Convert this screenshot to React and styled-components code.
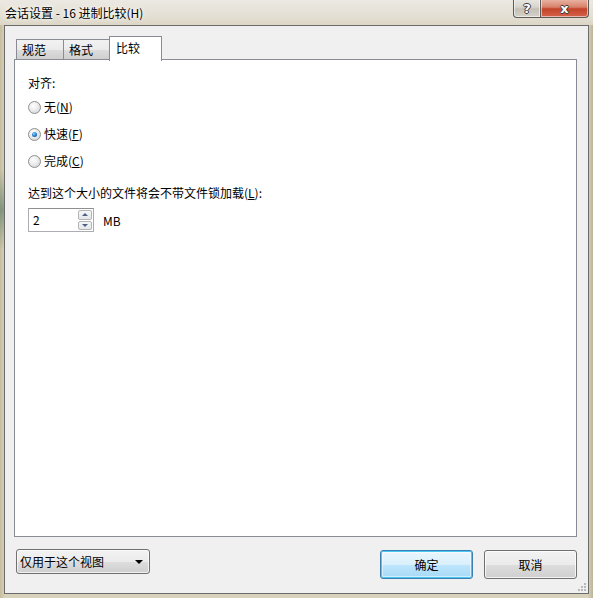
import React from "react";
import styled, { createGlobalStyle } from "styled-components";

const Global = createGlobalStyle`
  html, body { margin: 0; padding: 0; }
  body { font-family: "Noto Sans CJK SC", "Noto Sans", sans-serif; font-size: 12px; color: #000; }
  * { box-sizing: border-box; }
`;

const Window = styled.div`
  width: 593px;
  height: 598px;
  display: flex;
  flex-direction: column;
  overflow: hidden;
  background:
    radial-gradient(ellipse 60px 10px at 150px 18px, rgba(150,135,90,0.35), transparent),
    radial-gradient(ellipse 90px 8px at 260px 16px, rgba(120,110,90,0.25), transparent),
    radial-gradient(ellipse 40px 40px at 2px 210px, rgba(80,120,100,0.6), transparent),
    linear-gradient(to right, #c6bd9e 0px, #d8d2bc 5px, #d8d2bc 588px, #bdb498 593px),
    linear-gradient(to bottom, #e9e6de 0px, #e2ddd0 25px);
  background-blend-mode: normal;
`;

const TitleBar = styled.div`
  height: 25px;
  flex: none;
  display: flex;
  align-items: flex-start;
  background: linear-gradient(to bottom, #ebe9e2 0%, #e4e0d5 60%, #dcd6c6 100%);
`;

const Title = styled.div`
  padding: 5px 0 0 5px;
  font-size: 12px;
  line-height: 16px;
  color: #000;
  text-shadow: 0 0 6px #fff, 0 0 3px #fff;
  flex: 1;
`;

const Captions = styled.div`
  display: flex;
  margin-right: 4px;
  margin-top: -1px;
`;

const CaptionBtn = styled.div`
  width: ${(p) => p.$w}px;
  height: 19px;
  display: flex;
  align-items: center;
  justify-content: center;
  border: 1px solid #5d5a55;
  border-top: none;
  font-family: "DejaVu Sans", sans-serif;
  font-weight: bold;
  font-size: ${(p) => p.$fs}px;
  color: #fff;
  text-shadow: -1px 0 #3a3a3a, 1px 0 #3a3a3a, 0 -1px #3a3a3a, 0 1px #3a3a3a;
  background: ${(p) =>
    p.$close
      ? "linear-gradient(to bottom, #e8b8a8 0%, #d9826a 45%, #c2432a 55%, #d6634a 100%)"
      : "linear-gradient(to bottom, #e9e8e4 0%, #d7d4cc 45%, #c4c0b6 55%, #d4d1c8 100%)"};
  border-radius: ${(p) => (p.$close ? "0 0 4px 0" : "0 0 0 4px")};
  ${(p) => (p.$close ? "border-left: none;" : "")}
  box-shadow: inset 0 0 0 1px rgba(255,255,255,0.55);
`;

const Client = styled.div`
  flex: 1;
  margin: 0 4px 4px 4px;
  border: 1px solid #6b6b6b;
  background: #f0f0f0;
  padding: 9px 11px 0 9px;
  display: flex;
  flex-direction: column;
  position: relative;
`;

const TabStrip = styled.div`
  height: 25px;
  display: flex;
  align-items: flex-end;
  padding-left: 2px;
  position: relative;
  z-index: 1;
`;

const Tab = styled.div`
  height: ${(p) => (p.$active ? 25 : 21)}px;
  width: ${(p) => p.$w}px;
  margin-left: ${(p) => p.$ml || 0}px;
  margin-bottom: ${(p) => (p.$active ? -1 : 0)}px;
  border: 1px solid #898c95;
  border-bottom: ${(p) => (p.$active ? "none" : "1px solid #898c95")};
  background: ${(p) =>
    p.$active ? "#fff" : "linear-gradient(to bottom, #f2f2f2 0%, #ebebeb 50%, #dddddd 51%, #cfcfcf 100%)"};
  padding: ${(p) => (p.$active ? "3px 0 0 6px" : "2px 0 0 5px")};
  font-size: 12px;
  line-height: 16px;
`;

const Panel = styled.div`
  height: 478px;
  margin-top: -1px;
  border: 1px solid #898c95;
  background: #fff;
  padding: 15px 13px 0 13px;
  display: flex;
  flex-direction: column;
`;

const Label = styled.div`
  height: 16px;
  line-height: 16px;
  margin-top: ${(p) => p.$mt || 0}px;
`;

const RadioRow = styled.div`
  height: 16px;
  display: flex;
  align-items: center;
  gap: 3px;
  margin-top: ${(p) => p.$mt}px;
  line-height: 16px;
`;

const RadioCircle = styled.span`
  width: 13px;
  height: 13px;
  border-radius: 50%;
  border: 1px solid #8e8f8f;
  background: radial-gradient(circle at 40% 35%, #ffffff 0%, #f0f0f0 35%, #cfcfcf 100%);
  display: flex;
  align-items: center;
  justify-content: center;
  flex: none;
  &::after {
    content: "";
    display: ${(p) => (p.$checked ? "block" : "none")};
    width: 5px;
    height: 5px;
    border-radius: 50%;
    background: radial-gradient(circle at 40% 35%, #8ed3ff 0%, #1d78c8 55%, #0d3d74 100%);
  }
`;

const U = styled.span`
  text-decoration: underline;
`;

const SpinRow = styled.div`
  display: flex;
  align-items: center;
  margin-top: 7px;
  gap: 9px;
`;

const SpinBox = styled.div`
  width: 66px;
  height: 24px;
  border: 1px solid #abadb3;
  border-top-color: #8e8f8f;
  background: #fff;
  display: flex;
  align-items: stretch;
  padding: 1px 1px 1px 4px;
`;

const SpinValue = styled.div`
  flex: 1;
  line-height: 20px;
`;

const SpinButtons = styled.div`
  width: 14px;
  display: flex;
  flex-direction: column;
  gap: 1px;
`;

const SpinBtn = styled.div`
  flex: 1;
  border: 1px solid #b4b4b4;
  border-radius: 2px;
  background: linear-gradient(to bottom, #f4f6f8 0%, #e3e7ec 100%);
  display: flex;
  align-items: center;
  justify-content: center;
  &::after {
    content: "";
    width: 0;
    height: 0;
    border-left: 3px solid transparent;
    border-right: 3px solid transparent;
    ${(p) => (p.$up ? "border-bottom: 3px solid #4e5f80;" : "border-top: 3px solid #4e5f80;")}
  }
`;

const Footer = styled.div`
  display: flex;
  align-items: flex-start;
  margin-top: 12px;
  padding-left: 2px;
`;

const Dropdown = styled.div`
  width: 134px;
  height: 25px;
  border: 1px solid #707070;
  border-radius: 3px;
  background: linear-gradient(to bottom, #f2f2f2 0%, #ebebeb 50%, #dddddd 51%, #cfcfcf 100%);
  box-shadow: inset 0 0 0 1px rgba(255,255,255,0.7);
  display: flex;
  align-items: center;
  justify-content: space-between;
  padding: 0 6px 0 3px;
  line-height: 16px;
  &::after {
    content: "";
    width: 0;
    height: 0;
    border-left: 4px solid transparent;
    border-right: 4px solid transparent;
    border-top: 4px solid #000;
  }
`;

const Buttons = styled.div`
  margin-left: auto;
  display: flex;
  gap: 11px;
  margin-top: 1px;
`;

const Button = styled.div`
  width: 93px;
  height: 29px;
  border-radius: 3px;
  display: flex;
  align-items: center;
  justify-content: center;
  line-height: 16px;
  border: 1px solid ${(p) => (p.$default ? "#3c7fb1" : "#707070")};
  background: ${(p) =>
    p.$default
      ? "linear-gradient(to bottom, #eaf6fd 0%, #d9f0fc 50%, #bee6fd 51%, #a7d9f5 100%)"
      : "linear-gradient(to bottom, #f2f2f2 0%, #ebebeb 50%, #dddddd 51%, #cfcfcf 100%)"};
  box-shadow: ${(p) =>
    p.$default
      ? "inset 0 0 0 1px #48c7f4, inset 0 0 0 2px rgba(255,255,255,0.5)"
      : "inset 0 0 0 1px rgba(255,255,255,0.75)"};
`;

const Grip = styled.svg`
  position: absolute;
  right: 1px;
  bottom: 1px;
`;

export default function App() {
  return (
    <>
      <Global />
      <Window>
        <TitleBar>
          <Title>会话设置 - 16 进制比较(H)</Title>
          <Captions>
            <CaptionBtn $w={28} $fs={13}>?</CaptionBtn>
            <CaptionBtn $w={48} $fs={13} $close>x</CaptionBtn>
          </Captions>
        </TitleBar>
        <Client>
          <TabStrip>
            <Tab $w={48}>规范</Tab>
            <Tab $w={47} $ml={-1}>格式</Tab>
            <Tab $w={53} $ml={-1} $active>比较</Tab>
          </TabStrip>
          <Panel>
            <Label>对齐:</Label>
            <RadioRow $mt={8}>
              <RadioCircle />
              <span>无(<U>N</U>)</span>
            </RadioRow>
            <RadioRow $mt={11}>
              <RadioCircle $checked />
              <span>快速(<U>F</U>)</span>
            </RadioRow>
            <RadioRow $mt={11}>
              <RadioCircle />
              <span>完成(<U>C</U>)</span>
            </RadioRow>
            <Label $mt={16}>达到这个大小的文件将会不带文件锁加载(<U>L</U>):</Label>
            <SpinRow>
              <SpinBox>
                <SpinValue>2</SpinValue>
                <SpinButtons>
                  <SpinBtn $up />
                  <SpinBtn />
                </SpinButtons>
              </SpinBox>
              <span>MB</span>
            </SpinRow>
          </Panel>
          <Footer>
            <Dropdown>仅用于这个视图</Dropdown>
            <Buttons>
              <Button $default>确定</Button>
              <Button>取消</Button>
            </Buttons>
          </Footer>
          <Grip width="10" height="10" viewBox="0 0 10 10">
            <g fill="#b8b8b8">
              <rect x="7" y="1" width="2" height="2" />
              <rect x="4" y="4" width="2" height="2" />
              <rect x="7" y="4" width="2" height="2" />
              <rect x="1" y="7" width="2" height="2" />
              <rect x="4" y="7" width="2" height="2" />
              <rect x="7" y="7" width="2" height="2" />
            </g>
          </Grip>
        </Client>
      </Window>
    </>
  );
}
